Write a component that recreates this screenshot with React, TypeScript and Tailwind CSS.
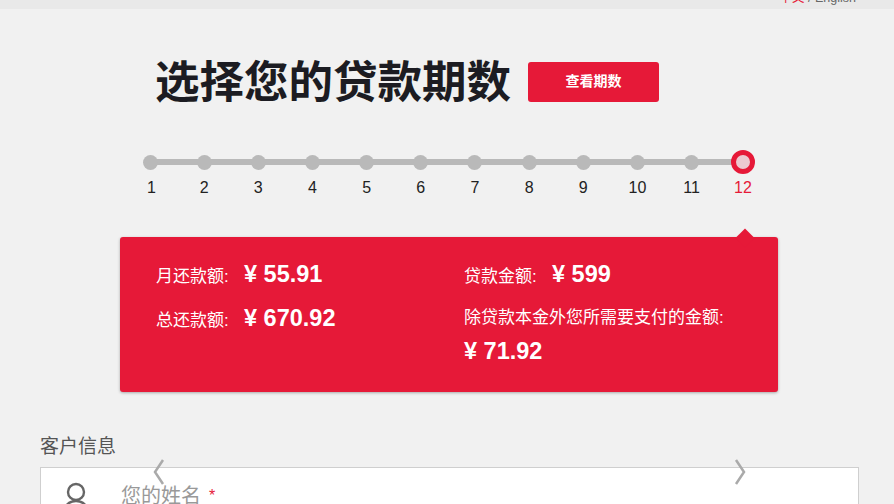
import React from "react";

const steps = [1, 2, 3, 4, 5, 6, 7, 8, 9, 10, 11];
const fontStack = "font-['Liberation_Sans','Noto_Sans_CJK_SC',sans-serif]";

function Step({ n }: { n: number }) {
	const active = n === 12;
	return (
		<div className="relative w-0 flex flex-col items-center">
			{
				active
					? <div className="w-[24px] h-[24px] shrink-0 rounded-full border-[5px] border-[#e61938] bg-[#ecc9d0]" />
					: <div className="w-[15px] h-[15px] my-[4.5px] shrink-0 rounded-full bg-[#b9b9b9]" />
			}
			<span className={ `mt-[2px] text-[16px] leading-[24px] ${ active ? "text-[#e61938]" : "text-[#222]" } ${ n === 1 ? "pl-[3px]" : "" }` }>{ n }</span>
		</div>
	);
}

function Amount({ label, value }: { label: string, value: string }) {
	return (
		<div className="flex items-start">
			<span className="w-[88px] pt-[4px] text-[17px] leading-[24px] whitespace-nowrap">{ label }</span>
			<span className="text-[23.5px] leading-[27px] font-bold">{ value }</span>
		</div>
	);
}

function App() {
	return (
		<div className={ `relative w-[894px] h-[504px] overflow-hidden bg-[#f1f1f1] ${ fontStack }` }>
			<div className="h-[9px] overflow-hidden bg-[#e9e9e9] flex justify-end pr-[38px]">
				<div className="-mt-[9px] text-[12.5px] leading-[15px] text-[#666]"><span className="text-[#e61938]">中文</span> / English</div>
			</div>

			<div className="flex items-center pl-[155px] pt-[46px]">
				<h1 className="text-[44.5px] leading-[56px] font-bold text-[#1c1c22] whitespace-nowrap">选择您的贷款期数</h1>
				<button className="ml-[17px] w-[131px] h-[40px] -mt-[3px] rounded-[3px] bg-[#e61938] text-white text-[14px] font-bold">查看期数</button>
			</div>

			<div className="relative mt-[39px] ml-[150px] w-[593px] h-[50px] flex">
				<div className="absolute left-0 right-0 top-[9px] h-[6px] bg-[#b9b9b9]" />
				<div className="relative w-[541.7px] flex justify-between">
					{ steps.map(n => <Step key={ n } n={ n } />) }
				</div>
				<div className="relative ml-[51.3px]">
					<Step n={ 12 } />
				</div>
			</div>

			<div className="relative mt-[37px] ml-[120px] w-[658px] h-[155px] rounded-[3px] bg-[#e61938] text-white shadow-[0_1px_3px_rgba(0,0,0,0.3)] grid grid-cols-[308px_1fr] pl-[36px] pt-[24px]">
				<div className="absolute left-[616px] -top-[8px] w-[18px] h-[18px] rotate-45 bg-[#e61938] scale-75" />
				<div className="flex flex-col gap-[16px]">
					<Amount label="月还款额:" value="¥ 55.91" />
					<Amount label="总还款额:" value="¥ 670.92" />
				</div>
				<div className="flex flex-col">
					<Amount label="贷款金额:" value="¥ 599" />
					<span className="mt-[17px] text-[17px] leading-[24px] whitespace-nowrap">除贷款本金外您所需要支付的金额:</span>
					<span className="mt-[8px] text-[23.5px] leading-[27px] font-bold">¥ 71.92</span>
				</div>
			</div>

			<div className="mt-[41px] mx-[40px] text-[19px] leading-[27px] text-[#555]">客户信息</div>
			<div className="mt-[7px] ml-[40px] w-[819px] h-[60px] bg-white border border-[#cfcfcf] flex items-start pl-[21px] pt-[14px]">
				<svg width="28" height="32" viewBox="0 0 28 32" fill="none" stroke="#666" strokeWidth="2.4">
					<circle cx="14" cy="10" r="8" />
					<path d="M2 31c0-7 5-12 12-12s12 5 12 12" />
				</svg>
				<span className="ml-[31px] text-[20px] leading-[28px] text-[#999]">您的姓名</span>
				<span className="ml-[8px] text-[16px] leading-[28px] text-[#e61938]">*</span>
			</div>

			<svg className="absolute left-[153px] top-[459px]" width="12" height="26" viewBox="0 0 12 26" fill="none" stroke="#aaa" strokeWidth="2.5">
				<path d="M10 1 2 13l8 12" />
			</svg>
			<svg className="absolute left-[734px] top-[459px]" width="12" height="26" viewBox="0 0 12 26" fill="none" stroke="#aaa" strokeWidth="2.5">
				<path d="M2 1l8 12-8 12" />
			</svg>
		</div>
	);
}

export default App;
